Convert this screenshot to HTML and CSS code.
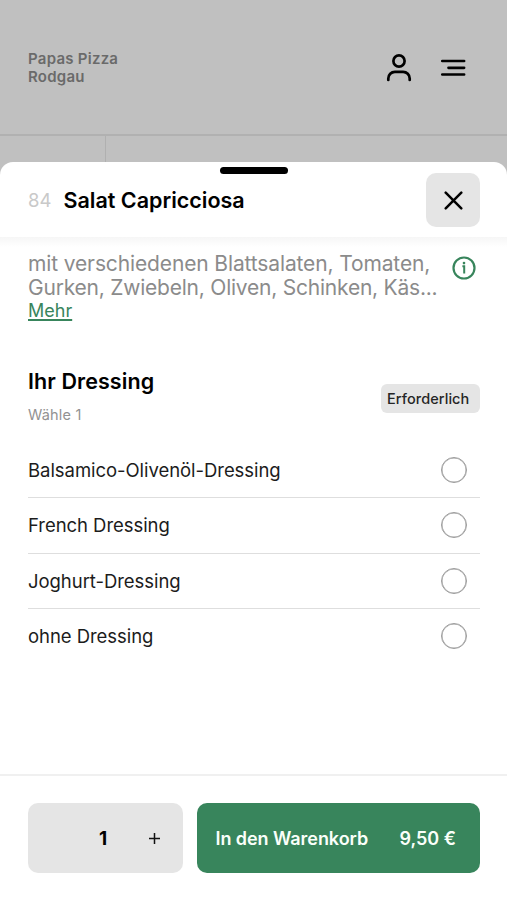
FILE: index.html
```html
<!DOCTYPE html>
<html lang="de">
<head>
<meta charset="utf-8">
<title>Salat Capricciosa</title>
<link rel="stylesheet" href="styles.css">
</head>
<body>
<div class="app">
  <header class="shop-header">
    <div class="shop-name">Papas Pizza<br>Rodgau</div>
    <div class="shop-actions">
      <svg width="26" height="30" viewBox="0 0 26 30" fill="none" stroke="#000" stroke-width="2.7" stroke-linecap="round"><circle cx="13" cy="8" r="5.6"/><path d="M2.3 27v-1.6a6.6 6.6 0 0 1 6.6-6.6h8.2a6.6 6.6 0 0 1 6.6 6.6V27"/></svg>
      <svg width="26" height="18" viewBox="0 0 26 18" fill="none" stroke="#000" stroke-width="2.7" stroke-linecap="round"><path d="M2.3 2h21.8M8.5 8.8h15.6M2.3 15.5h21.8"/></svg>
    </div>
  </header>
  <div class="category-strip"><div class="category-cell"></div></div>
  <main class="sheet">
    <div class="handle"></div>
    <div class="sheet-header">
      <span class="dish-number">84</span>
      <h1 class="dish-title">Salat Capricciosa</h1>
      <button class="close" aria-label="Schließen"><svg width="20" height="20" viewBox="0 0 20 20" fill="none" stroke="#000" stroke-width="2.5" stroke-linecap="round"><path d="M2.7 2.7l15.6 15.6M18.3 2.7L2.7 18.3"/></svg></button>
    </div>
    <div class="sheet-body">
      <section class="description">
        <div class="description-text">
          <p class="line-one">mit verschiedenen Blattsalaten, Tomaten,</p>
          <p class="line-two">Gurken, Zwiebeln, Oliven, Schinken, Käs...</p>
          <a class="more">Mehr</a>
        </div>
        <svg class="info" width="24" height="24" viewBox="0 0 24 24" fill="none" stroke="#38855c" stroke-width="2.2"><circle cx="12" cy="12" r="10.5"/><path d="M10.4 10.3H12.2V17.4" stroke-width="2"/><circle cx="12" cy="7.1" r="1.3" fill="#38855c" stroke="none"/></svg>
      </section>
      <section class="group-header">
        <div>
          <h2 class="group-title">Ihr Dressing</h2>
          <p class="group-hint">Wähle 1</p>
        </div>
        <span class="badge">Erforderlich</span>
      </section>
      <ul class="options">
        <li class="option"><span>Balsamico-Olivenöl-Dressing</span><i class="radio"></i></li>
        <li class="option"><span>French Dressing</span><i class="radio"></i></li>
        <li class="option"><span>Joghurt-Dressing</span><i class="radio"></i></li>
        <li class="option"><span>ohne Dressing</span><i class="radio"></i></li>
      </ul>
    </div>
    <footer class="cart-bar">
      <div class="stepper"><span></span><span class="count">1</span><svg class="plus" width="11" height="11" viewBox="0 0 11 11" stroke="#111" stroke-width="1.5"><path d="M0 5.5h11M5.5 0v11"/></svg></div>
      <button class="add"><span class="add-label">In den Warenkorb</span><span class="price">9,50 €</span></button>
    </footer>
  </main>
</div>
</body>
</html>
```

FILE: styles.css
```css
* { box-sizing: border-box; margin: 0; padding: 0; }
body { font-family: Inter, "Liberation Sans", sans-serif; background: #c0c0c0; color: #000; }
button { border: 0; font: inherit; }
svg { display: block; flex: none; }
.app { height: 900px; display: flex; flex-direction: column; overflow: hidden; }
.shop-header { height: 136px; flex: none; display: flex; justify-content: space-between; align-items: center; padding: 2px 41px 0 28px; border-bottom: 2px solid #b1b1b1; }
.shop-name { font-size: 15px; line-height: 18px; font-weight: 600; letter-spacing: .25px; color: #6a6a6a; }
.shop-actions { display: flex; align-items: center; gap: 28px; }
.category-strip { height: 26px; flex: none; }
.category-cell { width: 106px; height: 40px; border-right: 1px solid #b0b0b0; }
.sheet { flex: 1; position: relative; display: flex; flex-direction: column; background: #fff; border-radius: 13px 13px 0 0; }
.handle { width: 68px; height: 7px; margin: 5px auto 0; border-radius: 4px; background: #000; flex: none; }
.sheet-header { height: 63px; flex: none; display: flex; align-items: flex-start; padding: 0 27px 0 28px; }
.dish-number { width: 35.5px; font-size: 18.5px; line-height: 52px; color: #c9c9c9; }
.dish-title { font-size: 21.5px; line-height: 52px; font-weight: 600; }
.close { margin-left: auto; margin-top: -1px; width: 54px; height: 54px; border-radius: 10px; background: #e5e5e5; display: grid; place-items: center; }
.sheet-body { flex: 1; padding: 15px 27px 0 28px; background: linear-gradient(#f6f6f6, #fff 10px); }
.description { display: flex; justify-content: space-between; }
.description-text { color: #8b8b8b; font-size: 21px; line-height: 24px; white-space: nowrap; }
.line-one { letter-spacing: -.13px; }
.line-two { letter-spacing: -.22px; }
.more { display: block; width: max-content; font-size: 18px; line-height: 22px; color: #38855c; text-decoration: underline; text-underline-offset: 2px; text-decoration-thickness: 1.5px; }
.info { margin: 4px 4px 0 0; }
.group-header { display: flex; justify-content: space-between; margin-top: 44px; height: 77px; }
.group-title { font-size: 21.5px; line-height: 30px; font-weight: 600; letter-spacing: .08px; }
.group-hint { font-size: 14.5px; line-height: 20px; margin-top: 9px; letter-spacing: .2px; color: #929292; }
.badge { width: 99px; height: 29px; margin-top: 18px; padding-left: 6px; border-radius: 6px; background: #e5e5e5; font-size: 14.5px; line-height: 29px; font-weight: 500; letter-spacing: .07px; color: #252525; }
.options { list-style: none; }
.option { height: 55.33px; display: flex; justify-content: space-between; align-items: center; padding-right: 13px; font-size: 18.5px; letter-spacing: -.05px; color: #1c1c1c; border-bottom: 1px solid #dedede; }
.option:last-child { border-bottom-color: transparent; }
.radio { width: 26px; height: 26px; border: 1.8px solid #9b9b9b; border-radius: 50%; box-shadow: inset 0 0 0 .5px #9b9b9b; }
.cart-bar { height: 126px; flex: none; display: flex; align-items: flex-start; gap: 14px; padding: 27px 27px 0 28px; border-top: 2px solid #f0f0f0; }
.stepper { width: 154.5px; height: 70px; border-radius: 10px; background: #e5e5e5; display: grid; grid-template-columns: 51px 48px 55px; align-items: center; justify-items: center; }
.count { font-size: 19px; font-weight: 700; }
.add { flex: 1; height: 70px; border-radius: 10px; background: #38855c; color: #fafffa; display: flex; align-items: center; justify-content: space-between; padding: 0 24px 0 19px; font-size: 18px; font-weight: 600; white-space: nowrap; }
.add-label { letter-spacing: -.06px; }
```
